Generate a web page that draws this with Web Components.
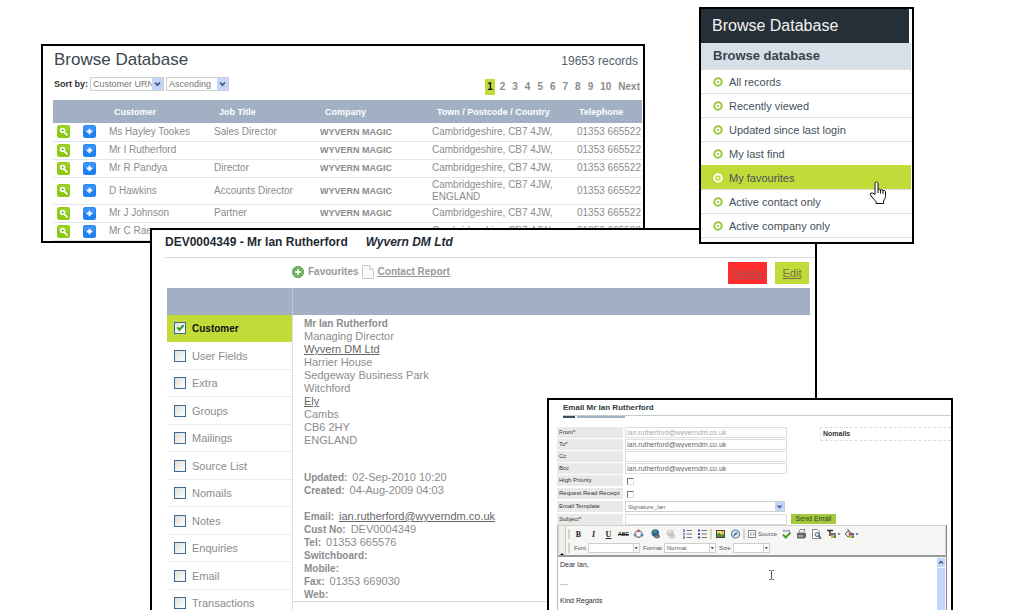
<!DOCTYPE html>
<html lang="en">
<head>
<meta charset="utf-8">
<title>Browse Database</title>
<style>
    html, body {
        margin: 0;
        height: 100%;
        background: #fff;
        font-family: Arial, "Liberation Sans", sans-serif;
    }
</style>
</head>
<body>
<wd-desktop>
    <wd-window class="browse"><wd-browse></wd-browse></wd-window>
    <wd-window class="customer"><wd-customer></wd-customer></wd-window>
    <wd-window class="menu">
        <wd-menu>
            <span slot="title">Browse Database</span>
            <span slot="group">Browse database</span>
            <wd-menu-item>All records</wd-menu-item>
            <wd-menu-item>Recently viewed</wd-menu-item>
            <wd-menu-item>Updated since last login</wd-menu-item>
            <wd-menu-item>My last find</wd-menu-item>
            <wd-menu-item active>My favourites</wd-menu-item>
            <wd-menu-item>Active contact only</wd-menu-item>
            <wd-menu-item>Active company only</wd-menu-item>
        </wd-menu>
    </wd-window>
    <wd-window class="email"><wd-email></wd-email></wd-window>
</wd-desktop>

<script>
const base = `
    *, *::before, *::after {box-sizing: border-box;}
    h1, h2, p, ul, ol, dl, dd, dt {margin: 0; padding: 0;}
    ul, ol {list-style: none;}
    a {color: inherit;}
    button, input, select, textarea {font: inherit; color: inherit; margin: 0; padding: 0; border-radius: 0;}
    svg {display: block;}
`;

function define(name, html, setup) {
    const tmp = document.createElement('template');
    customElements.define(name, class extends HTMLElement {
        constructor() {
            super();
            this.attachShadow({mode: 'open'});
            tmp.innerHTML = `<style>${base}</style>` + (typeof html === 'function' ? html(this) : html);
            this.shadowRoot.appendChild(document.importNode(tmp.content, true));
            if (setup) setup(this);
        }
    });
}

// name: [width, height, markup]
const icons = {
    find: [13, 13, `<rect width="13" height="13" rx="2.5" fill="#8cc814"/><rect x=".5" y=".5" width="12" height="6" rx="2" fill="#a2d92c" opacity=".6"/>
        <circle cx="5.6" cy="5.4" r="2.7" fill="#fff"/><path d="M7.4 7.3l2.6 2.5" stroke="#fff" stroke-width="1.7" stroke-linecap="round"/><path d="M4.2 5.4h2.8M5.6 4v2.8" stroke="#8b5" stroke-width=".9"/>`],
    add: [13, 13, `<rect width="13" height="13" rx="2.5" fill="#1f80f0"/><rect x=".5" y=".5" width="12" height="6" rx="2" fill="#4ba0ff" opacity=".6"/>
        <path d="M6.5 3.7v5.6M3.7 6.5h5.6" stroke="#fff" stroke-width="1.8"/>`],
    target: [10, 10, `<circle cx="5" cy="5" r="3.7" fill="none" stroke="currentColor" stroke-width="2"/><circle cx="5" cy="5" r="1" fill="currentColor"/>`],
    favourite: [12, 12, `<circle cx="6" cy="6" r="5.6" fill="#5cae50" stroke="#55824f" stroke-width=".8"/><circle cx="6" cy="6" r="4.4" fill="none" stroke="#a9d9a0" stroke-width=".6"/><path d="M6 3.2v5.6M3.2 6h5.6" stroke="#fff" stroke-width="1.9"/>`],
    page: [12, 14, `<path d="M.5.5h7.2l3.8 3.8v9.2H.5z" fill="#fbfbfb" stroke="#ccc"/><path d="M7.5.5v4h4" fill="#eee" stroke="#ccc"/>`],
    chevron: [11, 12, `<rect width="11" height="12" rx="1" fill="#c3d5fb"/><path d="M3 4.5l2.5 2.6L8 4.5" fill="none" stroke="#41597e" stroke-width="1.8"/>`],
    'chevron-small': [9, 9, `<rect width="9" height="9" rx="1" fill="#c3d5fb"/><path d="M2.500 3.500l2 2 2-2" fill="none" stroke="#41597e" stroke-width="1.400"/>`],
    caret: [6, 8, `<rect width="6" height="8" fill="#fafafa"/><path d="M.5 0v8" stroke="#d5d5c8"/><path d="M1.8 3.2h3L3.3 5z" fill="#111"/>`],
    cut: [13, 12, `<circle cx="6.5" cy="6" r="3.3" fill="none" stroke="#9aa0b4" stroke-width="1.5"/><circle cx="6.5" cy="2.7" r="1.5" fill="#c75b6a"/><circle cx="3" cy="7" r="1.5" fill="#8c77b8"/><circle cx="10" cy="7" r="1.5" fill="#4a7fc4"/><path d="M5 10l1.5-2L8 10z" fill="#777"/>`],
    link: [13, 12, `<circle cx="6.3" cy="5" r="3.8" fill="#2d67a6"/><path d="M4 3q2-2 4 0L6 5.5zM6 8l2-2 1.5.5L7.5 8.5z" fill="#4d9b52"/><rect x="5.5" y="7" width="5" height="2.8" rx="1.4" fill="#888" stroke="#444" stroke-width=".8"/>`],
    unlink: [13, 12, `<circle cx="6.3" cy="5" r="3.6" fill="#ccc"/><path d="M4 3q2-2 4 0L6 5.5z" fill="#e4e4e4"/><rect x="5.5" y="7" width="5" height="2.8" rx="1.4" fill="#ddd" stroke="#aaa" stroke-width=".8"/>`],
    numbers: [13, 12, `<path d="M5.5 2.5H11M5.5 6H11M5.5 9.5H11" stroke="#777"/><path d="M3 1v3M3 4.7v2.8M3 8.2V11" stroke="#3a4fa0" stroke-width="1.2"/>`],
    bullets: [13, 12, `<path d="M5.5 2.5H11M5.5 6H11M5.5 9.5H11" stroke="#777"/><path d="M2 2.5h2M2 6h2M2 9.5h2" stroke="#3a4fa0" stroke-width="1.8"/>`],
    picture: [13, 12, `<rect x="2.5" y="2.5" width="8" height="7" fill="#f4e676" stroke="#444"/><path d="M3 9V6l2.5-1.5L7.5 7 9 5.5l1 1V9z" fill="#4f8b3b"/><circle cx="8.5" cy="4.2" r=".9" fill="#d88b20"/>`],
    compass: [13, 12, `<circle cx="6.5" cy="6" r="4" fill="#dce9f2" stroke="#64829c" stroke-width="1.2"/><path d="M9 3.5L7.2 6.7 4 8.5l1.8-3.2z" fill="#466c92"/>`],
    source: [9, 10, `<rect x=".5" y="1.5" width="7" height="7" fill="#fff" stroke="#889"/><path d="M3.5 3.5L2.3 5l1.2 1.5M5 3.5L6.2 5 5 6.5" fill="none" stroke="#557" stroke-width=".8"/>`],
    check: [13, 12, `<path d="M3 2.8h7" stroke="#8a93b3" stroke-width="2" stroke-dasharray="1.8 .7"/><path d="M3 6.5L5.7 9.5 10.5 4.5" fill="none" stroke="#4aa02c" stroke-width="2"/>`],
    print: [13, 12, `<path d="M5 1.500h5L8.500 5h-5z" fill="#eee" stroke="#777" stroke-width=".8"/><path d="M2 5h9v4l-1.500 1.500H2z" fill="#666"/><path d="M3 8h5.500" stroke="#ddd"/>`],
    preview: [13, 12, `<path d="M2.5 1.5h5l2 2v7h-7z" fill="#fff" stroke="#888"/><circle cx="7" cy="6.5" r="2" fill="#cfe5f2" stroke="#456" stroke-width=".9"/><path d="M8.5 8l2.5 2.5" stroke="#345" stroke-width="1.2"/>`],
    textcolor: [17, 12, `<path d="M2 2.5h6M5 2.5V8" stroke="#333" stroke-width="1.5"/><rect x="6" y="5" width="2.5" height="2.5" fill="#d33"/><rect x="8.5" y="5" width="2.5" height="2.5" fill="#3a6fd0"/><rect x="6" y="7.5" width="2.5" height="2.5" fill="#e6b83a"/><rect x="8.5" y="7.5" width="2.5" height="2.5" fill="#3c9b4b"/><path d="M12.5 5.5h3L14 7z" fill="#222"/>`],
    fillcolor: [17, 12, `<path d="M2 6l3.5-3.5L9 5.5 5 9z" fill="#ddd" stroke="#555" stroke-width=".9"/><path d="M4 1.5q2-1 2 3" fill="none" stroke="#555" stroke-width=".8"/><rect x="6" y="5" width="2.5" height="2.5" fill="#d33"/><rect x="8.5" y="5" width="2.5" height="2.5" fill="#3a6fd0"/><rect x="6" y="7.5" width="2.5" height="2.5" fill="#e6b83a"/><rect x="8.5" y="7.5" width="2.5" height="2.5" fill="#3c9b4b"/><path d="M12.5 5.5h3L14 7z" fill="#222"/>`],
    hand: [20, 24, `<path d="M7 13.500V2.500a1.500 1.500 0 0 1 3 0V8.500q1.500-1 2.500.5 1.500-.9 2.500.6 1.800-.6 2.500 1V15.500q-.2 2-2 4.500V22.500H8V20.500L3 15q-1.500-2.200 0-3 1.400-.6 4 1.500z" fill="#fff" stroke="#111" stroke-linejoin="round"/><path d="M10 8.500V12M12.500 9v3.500M15 9.600v3.400" stroke="#111" fill="none"/>`],
    ibeam: [7, 10, `<path d="M1 .5h1.500l1 .7 1-.7H6M1 9.500h1.500l1-.7 1 .7H6M3.500 1v8" fill="none" stroke="#555"/>`],
    scrollup: [8, 9, `<rect width="8" height="9" rx="1" fill="#c3d5fb"/><path d="M2 5.5l2-2 2 2" fill="none" stroke="#41597e" stroke-width="1.4"/>`]
};

define('wd-icon', el => {
    const [w, h, body] = icons[el.getAttribute('name')];
    return `
        <style>:host {display: block; flex: none; width: ${w}px; height: ${h}px;}</style>
        <svg width="${w}" height="${h}" viewBox="0 0 ${w} ${h}" aria-hidden="true">${body}</svg>`;
});

define('wd-window', `
    <style>
        :host {display: flex; flex-direction: column; background: #fff; border: 2px solid #000; box-sizing: border-box; overflow: hidden;}
    </style>
    <slot></slot>
`);

define('wd-desktop', `
    <style>
        :host {display: block; position: relative; height: 100%; overflow: hidden;}
        ::slotted(wd-window) {position: absolute;}
        ::slotted(.browse) {left: 41px; right: 388px; top: 44px;}
        ::slotted(.customer) {left: 150px; right: 216px; top: 228px; bottom: -20px;}
        ::slotted(.menu) {right: 119px; width: 215px; top: 7px;}
        ::slotted(.email) {right: 80px; width: 406px; top: 398px; bottom: -20px;}
    </style>
    <slot></slot>
`);

// drop-down: <wd-select label="..." value="..." icon="chevron">
define('wd-select', el => {
    const label = el.getAttribute('label');
    const hidden = el.hasAttribute('hide-label');
    return `
    <style>
        :host {display: block;}
        label {display: flex; align-items: center; height: 100%; gap: 2px;}
        .label {font: var(--label-font, inherit); color: var(--label-color, inherit); white-space: nowrap;}
        .box {display: grid; align-items: center; width: var(--box-width, 100%); height: 100%; border: 1px solid #cfcfcf; background: #fff;}
        .box > * {grid-area: 1 / 1;}
        select {appearance: none; width: 100%; border: 0; background: none; padding-left: 2px; outline: 0;}
        wd-icon {justify-self: end; pointer-events: none;}
    </style>
    <label>
        ${hidden ? '' : `<span class="label">${label}</span>`}
        <span class="box">
            <select${hidden ? ` aria-label="${label}"` : ''}><option>${el.getAttribute('value') || ''}</option></select>
            <wd-icon name="${el.getAttribute('icon') || 'chevron'}"></wd-icon>
        </span>
    </label>`;
});

const records = [
    ['Ms Hayley Tookes', 'Sales Director', ''],
    ['Mr I Rutherford', '', ''],
    ['Mr R Pandya', 'Director', ''],
    ['D Hawkins', 'Accounts Director', 'ENGLAND'],
    ['Mr J Johnson', 'Partner', ''],
    ['Mr C Rae', '', '']
];

define('wd-browse', `
    <style>
        :host {display: block; color: #8c8c8c; font-size: 10px;}
        header {display: flex; justify-content: space-between; align-items: center; height: 28px; padding: 0 5px 0 11px; color: #3b464e;}
        h1 {font-size: 17px; font-weight: normal;}
        header p {font-size: 12px; color: #56616a; padding-top: 2px;}
        .tools {display: flex; justify-content: space-between; align-items: flex-start; height: 26px; padding: 3px 3px 0 11px;}
        .sort {display: flex; gap: 2px; font-size: 9px; color: #777; --label-font: bold 9px "Liberation Sans", sans-serif; --label-color: #333;}
        wd-select {height: 14px;}
        .by {--box-width: 74px;}
        .order {--box-width: 63px;}
        nav ol {display: flex; gap: 7px; padding-top: 2px; font-weight: bold; line-height: 16px;}
        nav a {display: block; text-decoration: none;}
        nav a[aria-current] {margin: 0 -2px; padding: 0 2px; background: #c3db38; color: #111;}
        .wrap {padding: 0 1px 0 10px;}
        table {width: 100%; table-layout: fixed; border-collapse: collapse;}
        th {height: 23px; padding: 0 0 0 5px; background: #a1b1c3; color: #fff; font-size: 9px; text-align: left;}
        td {height: 18px; padding: 1px 0; border-bottom: 1px solid #dfe7ee; line-height: 12px; white-space: nowrap;}
        td:first-child {padding-left: 4px;}
        td.company {font-size: 9px; font-weight: bold;}
        th:last-child {padding-left: 2px;}
        button {display: block; border: 0; background: none;}
    </style>
    <header><h1>Browse Database</h1><p>19653 records</p></header>
    <div class="tools">
        <div class="sort">
            <wd-select class="by" label="Sort by:" value="Customer URN"></wd-select>
            <wd-select class="order" label="Order" hide-label value="Ascending"></wd-select>
        </div>
        <nav><ol></ol></nav>
    </div>
    <div class="wrap">
        <table>
            <colgroup>
                <col style="width: 30px"><col style="width: 26px"><col style="width: 105px"><col style="width: 106px">
                <col style="width: 112px"><col><col style="width: 65px">
            </colgroup>
            <thead>
                <tr><th></th><th></th><th>Customer</th><th>Job Title</th><th>Company</th><th>Town / Postcode / Country</th><th>Telephone</th></tr>
            </thead>
            <tbody></tbody>
        </table>
    </div>
`, el => {
    const root = el.shadowRoot;
    root.querySelector('nav ol').innerHTML = [1, 2, 3, 4, 5, 6, 7, 8, 9, 10, 'Next']
        .map(n => `<li><a href="#"${n === 1 ? ' aria-current="page"' : ''}>${n}</a></li>`).join('');
    root.querySelector('tbody').innerHTML = records.map(([name, job, country]) => `
        <tr>
            <td><button aria-label="View"><wd-icon name="find"></wd-icon></button></td>
            <td><button aria-label="Add"><wd-icon name="add"></wd-icon></button></td>
            <td>${name}</td><td>${job}</td><td class="company">WYVERN MAGIC</td>
            <td>Cambridgeshire, CB7 4JW,${country ? '<br>' + country : ''}</td><td>01353 665522</td>
        </tr>`).join('');
});

define('wd-menu', `
    <style>
        :host {display: block; padding-bottom: 4px;}
        h1 {margin-right: 3px; padding-left: 11px; background: #252f37; color: #f2f2f2; font-size: 16px; font-weight: normal; line-height: 34px;}
        h2 {margin-right: 1px; padding-left: 12px; background: #d6e0e8; color: #39424a; font-size: 13px; line-height: 26px;}
        nav {margin-right: 1px; border-bottom: 1px dotted #c4c4c4;}
    </style>
    <h1><slot name="title"></slot></h1>
    <h2><slot name="group"></slot></h2>
    <nav><slot></slot></nav>
`);

define('wd-menu-item', el => `
    <style>
        :host {display: block; position: relative; height: 24px; box-sizing: border-box; border-top: 1px dotted #c4c4c4; color: #9cc832;}
        :host([active]) {background: #c3db38; border-color: #c3db38; color: #fff;}
        a {display: flex; align-items: center; gap: 6px; height: 100%; padding-left: 12px; text-decoration: none; font-size: 11px;}
        a span {color: #46525c;}
        .pointer {position: absolute; right: 23px; top: 15px; z-index: 1;}
    </style>
    <a href="#"><wd-icon name="target"></wd-icon><span><slot></slot></span></a>
    ${el.hasAttribute('active') ? '<wd-icon class="pointer" name="hand"></wd-icon>' : ''}
`);

define('wd-customer', `
    <style>
        :host {display: flex; flex-direction: column; flex: 1; min-height: 0; color: #8c8c8c; font-size: 11px;}
        h1 {display: flex; gap: 18px; align-items: center; height: 28px; margin-left: 13px; padding-bottom: 3px; border-bottom: 1px solid #d3dce5; color: #1f2a33; font-size: 12px; flex: none;}
        .actions {display: flex; align-items: center; height: 30px; padding: 0 6px 0 140px; flex: none;}
        .actions a {display: flex; align-items: center;}
        .links {display: flex; gap: 3px; flex: 1; padding-bottom: 3px; font-size: 10px; font-weight: bold; color: #999;}
        .links a {gap: 4px;}
        .fav {text-decoration: none;}
        .btn {justify-content: center; height: 22px; color: #6f6f4c;}
        .delete {width: 39px; margin-right: 8px; background: #ff2d2d; color: #9c5650;}
        .edit {width: 34px; background: #c3db38;}
        .bar, .body {display: grid; grid-template-columns: 125px 1fr; margin: 0 5px 0 15px;}
        .bar {height: 27px; background: #a1b1c3; flex: none;}
        .bar i:last-child {border-left: 1px dotted #d6e0e8;}
        .body {flex: 1; min-height: 0; margin-right: 0;}
        ul {display: grid; grid-auto-rows: 27px 28px;}
        li {border-bottom: 1px solid #ececec;}
        label {display: flex; align-items: center; gap: 6px; height: 100%; padding-left: 7px;}
        input {appearance: none; width: 12px; height: 12px; border: 1px solid #3d6a96; background: linear-gradient(135deg, #dcdcd7, #fff); display: grid; place-items: center;}
        input:checked::before {content: ""; width: 7px; height: 4px; margin-bottom: 2px; border: solid #21a121; border-width: 0 0 2px 2px; transform: rotate(-45deg);}
        li.on {background: #c3db38; border-color: #c3db38; color: #111; font-size: 10px; font-weight: bold;}
        .detail {border-left: 1px dotted #b9c6d2; line-height: 13px;}
        .text {padding: 2px 0 0 11px; border-bottom: 1px solid #d3dce5;}
        address {font-style: normal; margin-bottom: 24px;}
        dl + dl {margin-top: 13px;}
        dl div {display: flex; gap: 5px;}
        dt, b {font-size: 10px; font-weight: bold;}
        .text a {color: #666;}
    </style>
    <h1><span>DEV0004349 - Mr Ian Rutherford</span><em>Wyvern DM Ltd</em></h1>
    <div class="actions">
        <div class="links">
            <a class="fav" href="#"><wd-icon name="favourite"></wd-icon><span>Favourites</span></a>
            <a href="#"><wd-icon name="page"></wd-icon><span>Contact Report</span></a>
        </div>
        <a class="btn delete" href="#">Delete</a>
        <a class="btn edit" href="#">Edit</a>
    </div>
    <div class="bar"><i></i><i></i></div>
    <div class="body">
        <ul></ul>
        <div class="detail">
            <div class="text">
                <address>
                    <b>Mr Ian Rutherford</b><br>Managing Director<br><a href="#">Wyvern DM Ltd</a><br>Harrier House<br>
                    Sedgeway Business Park<br>Witchford<br><a href="#">Ely</a><br>Cambs<br>CB6 2HY<br>ENGLAND
                </address>
                <dl>
                    <div><dt>Updated:</dt><dd>02-Sep-2010 10:20</dd></div>
                    <div><dt>Created:</dt><dd>04-Aug-2009 04:03</dd></div>
                </dl>
                <dl>
                    <div><dt>Email:</dt><dd><a href="#">ian.rutherford@wyverndm.co.uk</a></dd></div>
                    <div><dt>Cust No:</dt><dd>DEV0004349</dd></div>
                    <div><dt>Tel:</dt><dd>01353 665576</dd></div>
                    <div><dt>Switchboard:</dt><dd></dd></div>
                    <div><dt>Mobile:</dt><dd></dd></div>
                    <div><dt>Fax:</dt><dd>01353 669030</dd></div>
                    <div><dt>Web:</dt><dd></dd></div>
                </dl>
            </div>
        </div>
    </div>
`, el => {
    const sections = ['Customer', 'User Fields', 'Extra', 'Groups', 'Mailings', 'Source List', 'Nomails', 'Notes', 'Enquiries', 'Email', 'Transactions'];
    el.shadowRoot.querySelector('ul').innerHTML = sections.map((s, i) => `
        <li class="${i ? '' : 'on'}"><label><input type="checkbox"${i ? '' : ' checked'}>${s}</label></li>`).join('');
});

define('wd-toolbar', `
    <style>
        :host {display: flex; height: 32px; background: #f6f6f4; border: 1px solid #d3d3c8; border-bottom: 2px solid #999; box-sizing: border-box; flex: none; color: #555; font-size: 6px;}
        .fold {display: flex; align-items: flex-end; justify-content: flex-start; width: 7px; height: auto; border: 0; border-right: 1px solid #c8c8bc; background: #efefea; padding: 0 0 0 1px;}
        .fold::before {content: ""; border: solid transparent; border-width: 0 2px 2px; border-bottom-color: #000;}
        .rows {padding-left: 2px;}
        .row {display: flex; align-items: center; height: 16px;}
        .row + .row {height: 12px;}
        .sep {width: 2px; height: 10px; background: #d9d3c0; margin-right: 1px;}
        button {display: flex; align-items: center; justify-content: center; width: 15px; height: 14px; border: 0; background: none;}
        .letter {font: bold 8px "Liberation Serif", serif; color: #222;}
        .wide {width: 31px; gap: 1px; font-size: 6px; margin: 0 1px;}
        .drop {width: 18px;}
        .gap {margin-left: 2px;}
        .abc {font: bold 5px "Liberation Sans", sans-serif; text-decoration: line-through;}
        wd-select {height: 10px; margin-left: 3px; --box-width: 52px;}
        .size {--box-width: 37px;}
    </style>
    <button class="fold" aria-label="Collapse toolbar"></button>
    <div class="rows">
        <div class="row">
            <i class="sep"></i>
            <button class="letter">B</button>
            <button class="letter"><em>I</em></button>
            <button class="letter"><u>U</u></button>
            <button class="letter abc">ABC</button>
            <button aria-label="Remove format"><wd-icon name="cut"></wd-icon></button>
            <button class="gap" aria-label="Link"><wd-icon name="link"></wd-icon></button>
            <button aria-label="Unlink"><wd-icon name="unlink"></wd-icon></button>
            <button class="gap" aria-label="Numbered list"><wd-icon name="numbers"></wd-icon></button>
            <button aria-label="Bulleted list"><wd-icon name="bullets"></wd-icon></button>
            <i class="sep"></i>
            <button aria-label="Image"><wd-icon name="picture"></wd-icon></button>
            <button aria-label="Anchor"><wd-icon name="compass"></wd-icon></button>
            <i class="sep"></i>
            <button class="wide"><wd-icon name="source"></wd-icon>Source</button>
            <button aria-label="Check spelling"><wd-icon name="check"></wd-icon></button>
            <button aria-label="Print"><wd-icon name="print"></wd-icon></button>
            <button aria-label="Preview"><wd-icon name="preview"></wd-icon></button>
            <button class="drop" aria-label="Text colour"><wd-icon name="textcolor"></wd-icon></button>
            <button class="drop" aria-label="Background colour"><wd-icon name="fillcolor"></wd-icon></button>
        </div>
        <div class="row">
            <i class="sep"></i>
            <wd-select label="Font" icon="caret"></wd-select>
            <wd-select label="Format" value="Normal" icon="caret"></wd-select>
            <wd-select class="size" label="Size" icon="caret"></wd-select>
        </div>
    </div>
`);

define('wd-email', `
    <style>
        :host {display: flex; flex-direction: column; flex: 1; min-height: 0; font-size: 6px; color: #333;}
        h1 {height: 16px; margin-left: 14px; border-bottom: 1px solid #c3cdcf; color: #333c44; font-size: 8px; line-height: 15px; flex: none;}
        .accent {display: flex; gap: 2px; height: 2px; margin: 0 0 9px 14px; flex: none;}
        .accent i:first-child {width: 12px; background: #3f4f58;}
        .accent i:last-child {width: 48px; background: #a1b1c3;}
        form {display: grid; grid-template-columns: 66px 162px 1fr; column-gap: 2px; padding-left: 8px; flex: none;
            grid-template-rows: repeat(4, 12px) repeat(3, 13px) 11px; align-items: start;}
        .label {grid-column: 1; height: 11px; padding-left: 2px; background: #e9e9e9; line-height: 11px;}
        form > input, form > wd-select {grid-column: 2;}
        input {height: 11px; border: 1px solid #ddd; padding-left: 1px; font-size: 7px; color: #666; background: #fff;}
        input:disabled {color: #aaa;}
        input[type=checkbox] {appearance: none; width: 7px; height: 7px; margin: 3px 0 0 2px; padding: 0; border: 1px solid; border-color: #777 #ddd #ddd #777;}
        wd-select {height: 11px; --box-width: 160px; color: #666;}
        .nomails {grid-area: 1 / 3 / span 2; height: 14px; margin-left: 31px; padding-left: 2px; border: 1px dashed #ddd; border-right: 0; font-size: 7px; font-weight: bold; line-height: 12px;}
        .send {grid-area: 8 / 3; width: 45px; height: 10px; margin-left: 2px; border: 0; background: #a3c93f; color: #34431c; font-size: 7px; line-height: 10px;}
        .editor {display: flex; flex-direction: column; flex: 1; min-height: 0; margin: 0 4px 0 8px; border-right: 1px solid #888; border-left: 1px solid #bbb;}
        .page {display: flex; position: relative; flex: 1; min-height: 0;}
        textarea {flex: 1; border: 0; outline: 0; resize: none; padding: 3px 2px; overflow: hidden; background: none; color: #2d2a3c; font-size: 7px; line-height: 9px;}
        .scroll {width: 9px; padding: 1px 1px 0 0; background: linear-gradient(#c3d5fb, #c3d5fb) 0 11px / 8px no-repeat, #f3f5fb;}
        .ibeam {position: absolute; left: 210px; top: 13px;}
    </style>
    <h1>Email Mr Ian Rutherford</h1>
    <div class="accent"><i></i><i></i></div>
    <form>
        <label class="label" for="from">From*</label><input id="from" value="ian.rutherford@wyverndm.co.uk" disabled>
        <label class="label" for="to">To*</label><input id="to" value="ian.rutherford@wyverndm.co.uk">
        <label class="label" for="cc">Cc</label><input id="cc">
        <label class="label" for="bcc">Bcc</label><input id="bcc" value="ian.rutherford@wyverndm.co.uk">
        <label class="label" for="high">High Priority</label><input id="high" type="checkbox">
        <label class="label" for="receipt">Request Read Receipt</label><input id="receipt" type="checkbox">
        <span class="label">Email Template</span><wd-select label="Email Template" value="Signature_Ian" icon="chevron-small" hide-label></wd-select>
        <label class="label" for="subject">Subject*</label><input id="subject">
        <div class="nomails">Nomails</div>
        <button class="send" type="button">Send Email</button>
    </form>
    <div class="editor">
        <wd-toolbar></wd-toolbar>
        <div class="page">
            <textarea aria-label="Message" spellcheck="false">Dear Ian,

....

Kind Regards</textarea>
            <div class="scroll"><wd-icon name="scrollup"></wd-icon></div>
            <wd-icon class="ibeam" name="ibeam"></wd-icon>
        </div>
    </div>
`);
</script>
</body>
</html>
